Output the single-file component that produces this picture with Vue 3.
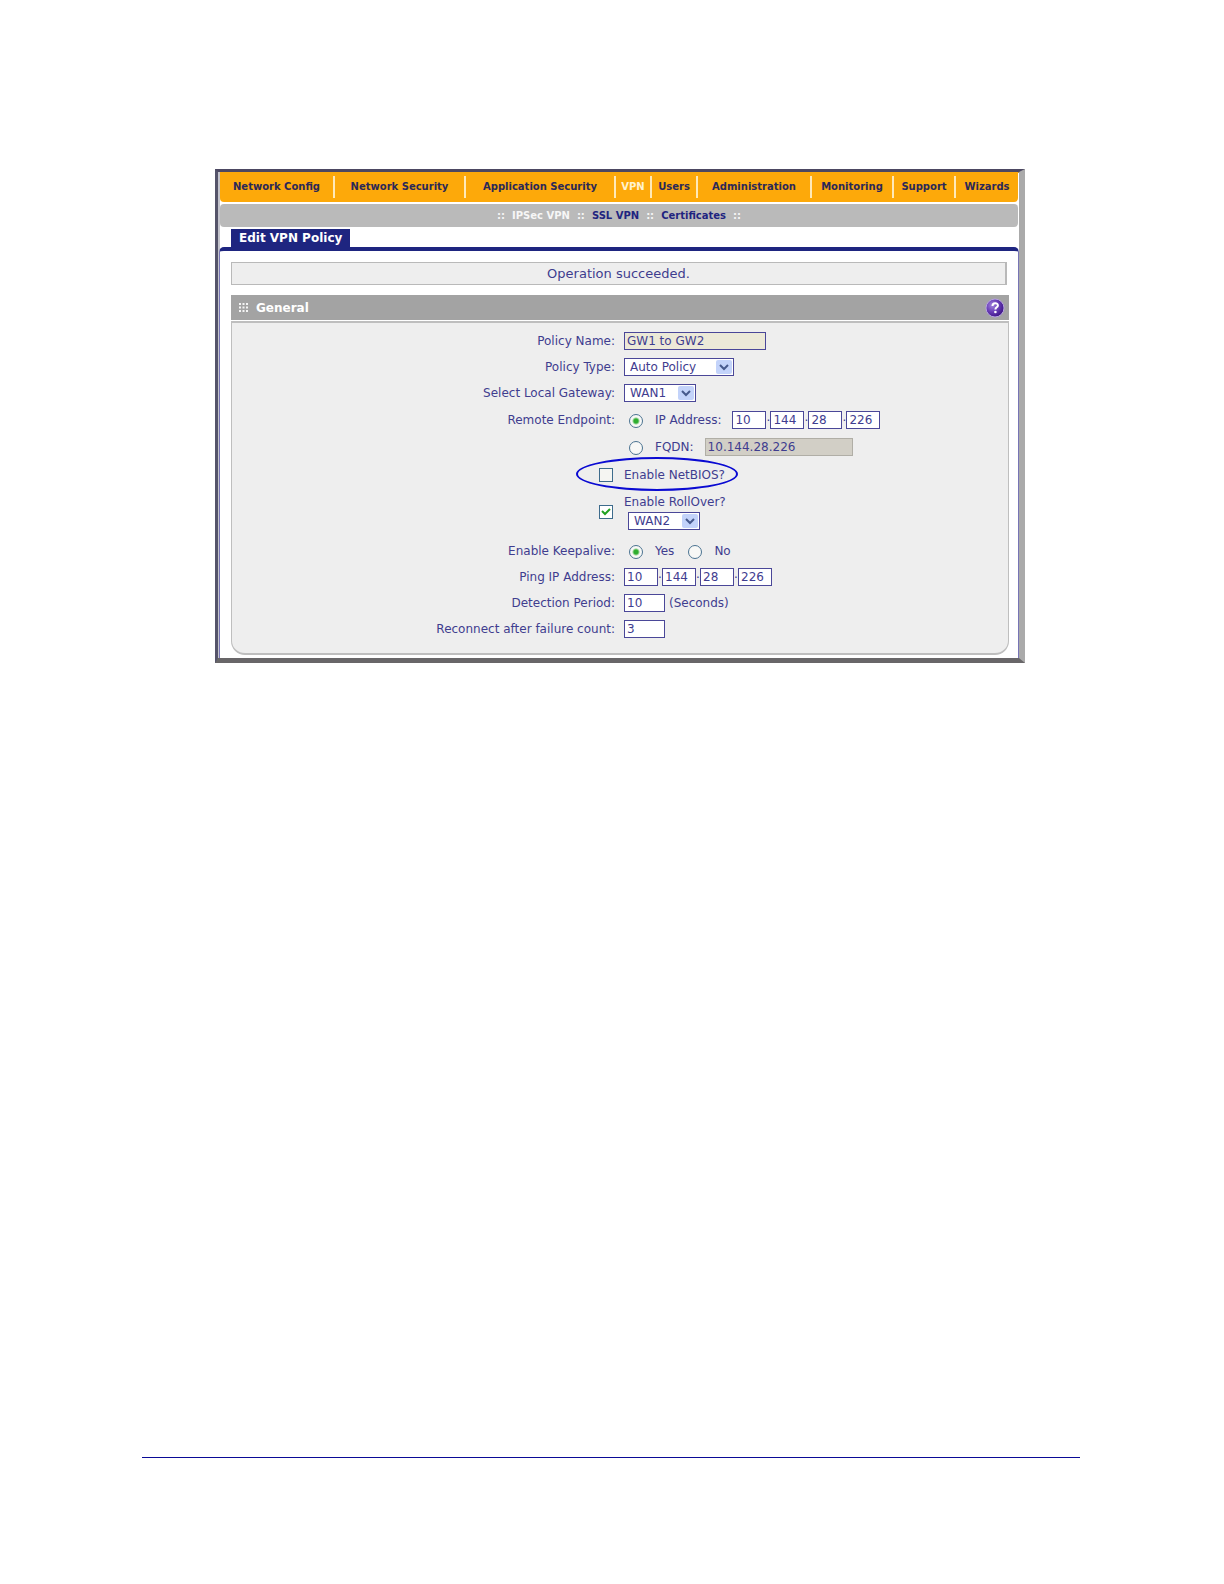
<script setup>
import { ref } from 'vue'

const sections = ['Network Config', 'Network Security', 'Application Security', 'VPN', 'Users', 'Administration', 'Monitoring', 'Support', 'Wizards']
const activeSection = 'VPN'
const pages = ['IPSec VPN', 'SSL VPN', 'Certificates']
const activePage = 'IPSec VPN'

const policyName = ref('GW1 to GW2')
const policyType = ref('Auto Policy')
const gateway = ref('WAN1')
const endpoint = ref('ip')
const remoteIp = ref(['10', '144', '28', '226'])
const fqdn = ref('10.144.28.226')
const netbios = ref(false)
const rollover = ref(true)
const rolloverWan = ref('WAN2')
const keepalive = ref('yes')
const pingIp = ref(['10', '144', '28', '226'])
const period = ref('10')
const failures = ref('3')
</script>

<template>
  <div class="page">
    <main class="window">
      <nav class="sections">
        <a v-for="s in sections" :key="s" href="#" :class="{ active: s === activeSection }">{{ s }}</a>
      </nav>
      <nav class="pages">
        <template v-for="p in pages" :key="p">
          <span class="dots">::</span>
          <a href="#" :class="{ active: p === activePage }">{{ p }}</a>
        </template>
        <span class="dots">::</span>
      </nav>
      <div class="tabs"><h1>Edit VPN Policy</h1></div>
      <div class="content">
        <p class="status">Operation succeeded.</p>
        <header class="bar">
          <svg class="grip" viewBox="0 0 18 18" aria-hidden="true">
            <path d="M0 2h18M0 9h18M0 16h18" stroke="#f4f4f4" stroke-width="4" stroke-dasharray="4 3" />
          </svg>
          <h2>General</h2>
          <button type="button" class="help" aria-label="Help">
            <svg viewBox="0 0 20 20" aria-hidden="true">
              <defs>
                <radialGradient id="orb" cx="35%" cy="35%" r="70%">
                  <stop offset="0%" stop-color="#a184dc" />
                  <stop offset="50%" stop-color="#6a3fb8" />
                  <stop offset="100%" stop-color="#3c1485" />
                </radialGradient>
              </defs>
              <circle cx="10" cy="10" r="9" fill="url(#orb)" stroke="#b7a2e2" stroke-width="1" />
              <path d="M7.500 8c0-3.600 5.400-3.600 5.400-.6 0 2-2.500 1.800-2.500 4" fill="none" stroke="#fff" stroke-width="2" />
              <circle cx="10.400" cy="14" r="1.300" fill="#fff" />
            </svg>
          </button>
        </header>
        <form class="panel" @submit.prevent>
          <div class="row">
            <label class="name" for="policy-name">Policy Name:</label>
            <div class="field"><input id="policy-name" v-model="policyName" type="text" class="text wide" readonly></div>
          </div>
          <div class="row">
            <label class="name" for="policy-type">Policy Type:</label>
            <div class="field">
              <span class="select type">
                <select id="policy-type" v-model="policyType"><option>Auto Policy</option><option>Manual Policy</option></select>
                <svg viewBox="0 0 16 14" aria-hidden="true"><path d="M4 5l4 4 4-4" /></svg>
              </span>
            </div>
          </div>
          <div class="row">
            <label class="name" for="gateway">Select Local Gateway:</label>
            <div class="field">
              <span class="select">
                <select id="gateway" v-model="gateway"><option>WAN1</option><option>WAN2</option></select>
                <svg viewBox="0 0 16 14" aria-hidden="true"><path d="M4 5l4 4 4-4" /></svg>
              </span>
            </div>
          </div>
          <div class="row tall">
            <span class="name">Remote Endpoint:</span>
            <div class="field">
              <input id="by-ip" v-model="endpoint" type="radio" value="ip" name="endpoint">
              <label for="by-ip">IP Address:</label>
              <span class="ip after">
                <template v-for="(o, i) in remoteIp" :key="i">
                  <span v-if="i" class="dot">.</span>
                  <input v-model="remoteIp[i]" type="text" class="text octet" :aria-label="`Remote IP octet ${i + 1}`">
                </template>
              </span>
            </div>
          </div>
          <div class="row tall">
            <span class="name"></span>
            <div class="field">
              <input id="by-fqdn" v-model="endpoint" type="radio" value="fqdn" name="endpoint">
              <label for="by-fqdn">FQDN:</label>
              <input v-model="fqdn" type="text" class="text fqdn after" aria-label="FQDN" disabled>
            </div>
          </div>
          <div class="row option">
            <span class="name"><input id="netbios" v-model="netbios" type="checkbox"></span>
            <div class="field"><label for="netbios">Enable NetBIOS?</label></div>
            <span class="marker"></span>
          </div>
          <div class="row rollover">
            <span class="name"><input id="rollover" v-model="rollover" type="checkbox"></span>
            <div class="field stacked">
              <label for="rollover">Enable RollOver?</label>
              <span class="select indent">
                <select v-model="rolloverWan" aria-label="RollOver WAN"><option>WAN1</option><option>WAN2</option></select>
                <svg viewBox="0 0 16 14" aria-hidden="true"><path d="M4 5l4 4 4-4" /></svg>
              </span>
            </div>
          </div>
          <div class="row">
            <span class="name">Enable Keepalive:</span>
            <div class="field">
              <input id="keep-yes" v-model="keepalive" type="radio" value="yes" name="keepalive">
              <label for="keep-yes">Yes</label>
              <input id="keep-no" v-model="keepalive" type="radio" value="no" name="keepalive" class="second">
              <label for="keep-no">No</label>
            </div>
          </div>
          <div class="row">
            <span class="name">Ping IP Address:</span>
            <div class="field">
              <span class="ip">
                <template v-for="(o, i) in pingIp" :key="i">
                  <span v-if="i" class="dot">.</span>
                  <input v-model="pingIp[i]" type="text" class="text octet" :aria-label="`Ping IP octet ${i + 1}`">
                </template>
              </span>
            </div>
          </div>
          <div class="row">
            <label class="name" for="period">Detection Period:</label>
            <div class="field"><input id="period" v-model="period" type="text" class="text short"><span class="unit">(Seconds)</span></div>
          </div>
          <div class="row">
            <label class="name" for="failures">Reconnect after failure count:</label>
            <div class="field"><input id="failures" v-model="failures" type="text" class="text short"></div>
          </div>
        </form>
      </div>
    </main>
    <hr class="rule">
  </div>
</template>

<style>
body {
  margin: 0;
  background: #fff;
}
</style>

<style scoped>
* {
  box-sizing: border-box;
}
.page {
  display: flex;
  flex-direction: column;
  min-height: 100vh;
  padding: 169px 144px 126px 142px;
  font-family: "DejaVu Sans", sans-serif;
  font-size: 12px;
  line-height: 14px;
  color: #3f3d8f;
}
.window {
  margin: 0 55px 0 73px;
  border-style: solid;
  border-width: 3px 6px 5px 3px;
  border-color: #4c4862 #aaaaaa #686668 #55546a;
  box-shadow: inset 2px 0 #c4c4cc, inset 0 1px #b08a45;
  background: #fff;
  padding: 0 0 0 1px;
}
.sections {
  display: grid;
  grid-template-columns: 115fr 131fr 150fr 36fr 46fr 114fr 82fr 62fr 62fr;
  align-items: center;
  height: 30px;
  margin: 0 1px;
  background: #fda90a;
  border-radius: 0 0 4px 4px;
  font-size: 10px;
  font-weight: bold;
}
.sections a {
  display: flex;
  align-items: center;
  justify-content: center;
  height: 22px;
  border-right: 2px solid #ffe9b8;
  color: #2b2858;
  text-decoration: none;
  white-space: nowrap;
}
.sections a:last-child {
  border-right: 0;
}
.sections a.active {
  color: #fff3d0;
}
.pages {
  display: flex;
  align-items: center;
  justify-content: center;
  gap: 7px;
  height: 23px;
  margin: 2px 1px 0;
  border-radius: 4px;
  background: #bababa;
  font-size: 10px;
  font-weight: bold;
}
.pages a {
  color: #1f2480;
  text-decoration: none;
}
.pages a.active,
.pages .dots {
  color: #f6f6f6;
}
.tabs {
  display: flex;
  margin-top: 2px;
  padding-left: 12px;
}
h1 {
  margin: 0;
  padding: 0 8px;
  background: #1e2580;
  color: #fff;
  font-size: 12px;
  line-height: 18px;
}
.content {
  padding: 11px 9px 3px 11px;
  border: solid #7774b5;
  border-width: 4px 1px 0;
  border-top-color: #1e2580;
  border-radius: 5px 5px 0 0;
}
.status {
  margin: 0 2px 10px 0;
  border: 1px solid #b9b9b9;
  border-right-width: 2px;
  background: #eee;
  font-size: 13px;
  line-height: 21px;
  text-align: center;
}
.bar {
  display: flex;
  align-items: center;
  height: 25px;
  padding: 0 4px 0 8px;
  background: #a3a3a3;
}
.grip {
  width: 9px;
  height: 9px;
}
h2 {
  flex: 1;
  margin: 0 0 0 8px;
  color: #fff;
  font-size: 12px;
  line-height: 14px;
}
.help {
  width: 20px;
  height: 20px;
  padding: 0;
  border: 0;
  background: none;
}
.help svg {
  display: block;
}
.panel {
  margin-top: 1px;
  padding: 5px 0 11px;
  border: 1px solid #bebebe;
  border-width: 2px 1px;
  border-radius: 0 0 14px 14px;
  background: #eee;
}
.row {
  position: relative;
  display: grid;
  grid-template-columns: 1fr 1fr;
  align-items: center;
  min-height: 26px;
}
.row.tall {
  min-height: 27px;
}
.row.option {
  min-height: 29px;
}
.row.rollover {
  min-height: 49px;
  padding-bottom: 3px;
}
.name {
  display: flex;
  justify-content: flex-end;
  padding-right: 5px;
}
.field {
  display: flex;
  align-items: center;
  padding-left: 4px;
}
.field.stacked {
  flex-direction: column;
  align-items: flex-start;
  gap: 3px;
}
input,
select {
  margin: 0;
  font: inherit;
  color: inherit;
}
.text {
  height: 18px;
  padding: 0 2px;
  border: 1px solid #4a4798;
  outline: 0;
  background: #fff;
}
.wide {
  width: 142px;
  background: #ece9d8;
}
.octet {
  width: 34px;
}
.short {
  width: 41px;
}
.fqdn {
  width: 148px;
  border-color: #b0aea6;
  background: #d2cfc6;
}
.after {
  margin-left: 11px;
}
.unit {
  margin-left: 4px;
}
.ip {
  display: flex;
  align-items: center;
}
.dot {
  width: 4px;
  padding-bottom: 6px;
  text-align: center;
}
.select {
  display: flex;
  align-items: center;
  width: 72px;
  height: 18px;
  border: 1px solid #4a4798;
  background: #fff;
}
.select.type {
  width: 110px;
}
.select.indent {
  margin-left: 4px;
}
.select select {
  flex: 1;
  min-width: 0;
  padding: 0 0 0 5px;
  border: 0;
  background: none;
  appearance: none;
}
.select svg {
  flex: none;
  width: 16px;
  height: 14px;
  margin-right: 1px;
  border-radius: 2px;
  background: #c3d3fa;
}
.select path {
  fill: none;
  stroke: #46598c;
  stroke-width: 2;
}
input[type="radio"] {
  width: 14px;
  height: 14px;
  margin: 2px 12px 0 5px;
  border: 1px solid #4b7391;
  border-radius: 50%;
  background: #f8f8f6;
  appearance: none;
}
input[type="radio"]:checked {
  background: radial-gradient(circle, #2fae2f 2px, #f8f8f6 4px);
}
input[type="radio"].second {
  margin-left: 14px;
}
input[type="checkbox"] {
  width: 14px;
  height: 14px;
  margin-right: 2px;
  border: 1px solid #3d6b8c;
  background: #f5f5f2;
  appearance: none;
}
input[type="checkbox"]:checked {
  background: #fff url("data:image/svg+xml,%3Csvg xmlns='http://www.w3.org/2000/svg' viewBox='0 0 12 12'%3E%3Cpath d='M2 5l3 3 5-5' fill='none' stroke='%2321a121' stroke-width='2'/%3E%3C/svg%3E");
}
.marker {
  position: absolute;
  top: -3px;
  left: calc(50% - 44px);
  width: 162px;
  height: 34px;
  border: 2px solid #0a0ad2;
  border-radius: 50%;
  pointer-events: none;
}
.rule {
  width: 100%;
  height: 1px;
  margin: auto 0 0;
  border: 0;
  background: #0a0a96;
}
</style>
